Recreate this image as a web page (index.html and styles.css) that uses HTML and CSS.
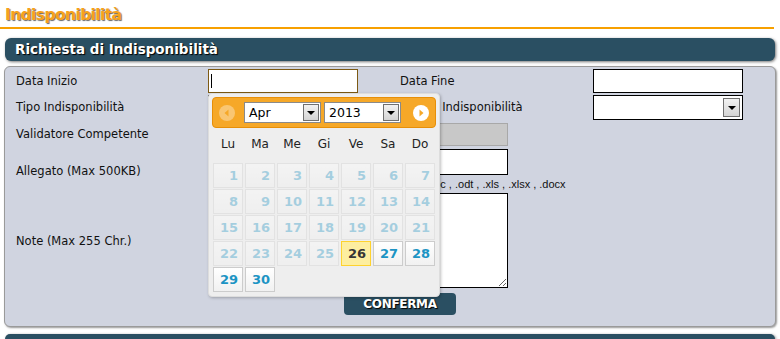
FILE: index.html
```html
<!DOCTYPE html>
<html lang="it">
<head>
    <meta charset="UTF-8">
    <meta name="viewport" content="width=device-width, initial-scale=1.0">
    <title>Indisponibilità</title>
    <link rel="stylesheet" href="styles.css">
</head>
<body>
    <h1 class="page-title">Indisponibilità</h1>

    <div class="section-bar">Richiesta di Indisponibilità</div>

    <div class="panel">
        <div class="form-grid">
            <div class="lbl lbl-r1">Data Inizio</div>
            <div class="cell">
                <div class="focus-wrap"><input type="text" class="field field-focus"></div>
            </div>
            <div class="lbl lbl-r1">Data Fine</div>
            <div class="cell"><input type="text" class="field"></div>

            <div class="lbl lbl-r2">Tipo Indisponibilità</div>
            <div class="cell">
                <div class="fake-select sel-form"><span class="sel-text"></span><span class="sel-btn"><span class="tri"></span></span></div>
            </div>
            <div class="lbl lbl-r2">Motivo Indisponibilità</div>
            <div class="cell">
                <div class="fake-select sel-form"><span class="sel-text"></span><span class="sel-btn"><span class="tri"></span></span></div>
            </div>

            <div class="lbl lbl-r3">Validatore Competente</div>
            <div class="cell span3"><input type="text" class="field field-wide field-disabled" disabled></div>

            <div class="lbl lbl-mid">Allegato (Max 500KB)</div>
            <div class="cell span3">
                <input type="text" class="field field-wide field-file">
                <div class="hint">.doc , .odt , .xls , .xlsx , .docx</div>
            </div>

            <div class="lbl lbl-mid">Note (Max 255 Chr.)</div>
            <div class="cell span3"><textarea class="notes"></textarea></div>
        </div>

        <div class="actions">
            <button class="btn-confirm">CONFERMA</button>
        </div>

        <!-- datepicker aperto sotto "Data Inizio" -->
        <div class="datepicker">
            <div class="dp-header">
                <span class="dp-nav dp-prev">
                    <svg width="16" height="16" viewBox="0 0 16 16"><circle cx="8" cy="8" r="8" fill="#fff"/><path d="M9.5 4.5 L5.5 8 L9.5 11.5 Z" fill="#f6a828"/></svg>
                </span>
                <div class="fake-select sel-month"><span class="sel-text">Apr</span><span class="sel-btn"><span class="tri"></span></span></div>
                <div class="fake-select sel-year"><span class="sel-text">2013</span><span class="sel-btn"><span class="tri"></span></span></div>
                <span class="dp-nav dp-next">
                    <svg width="16" height="16" viewBox="0 0 16 16"><circle cx="8" cy="8" r="8" fill="#fff"/><path d="M6.5 4.5 L10.5 8 L6.5 11.5 Z" fill="#f6a828"/></svg>
                </span>
            </div>
            <div class="dp-days">
                <span>Lu</span><span>Ma</span><span>Me</span><span>Gi</span><span>Ve</span><span>Sa</span><span>Do</span>
            </div>
            <div class="dp-grid">
                <span class="day off">1</span><span class="day off">2</span><span class="day off">3</span><span class="day off">4</span><span class="day off">5</span><span class="day off">6</span><span class="day off">7</span>
                <span class="day off">8</span><span class="day off">9</span><span class="day off">10</span><span class="day off">11</span><span class="day off">12</span><span class="day off">13</span><span class="day off">14</span>
                <span class="day off">15</span><span class="day off">16</span><span class="day off">17</span><span class="day off">18</span><span class="day off">19</span><span class="day off">20</span><span class="day off">21</span>
                <span class="day off">22</span><span class="day off">23</span><span class="day off">24</span><span class="day off">25</span><span class="day today">26</span><span class="day">27</span><span class="day">28</span>
                <span class="day">29</span><span class="day">30</span>
            </div>
        </div>
    </div>

    <div class="section-bar section-next"></div>
</body>
</html>
```

FILE: styles.css
```css
html, body {
    height: 339px;
    overflow: hidden;
}

body {
    margin: 0;
    width: 780px;
    font-family: 'DejaVu Sans', Verdana, sans-serif;
    font-size: 11.5px;
    color: #111;
    background: #fff;
}

.page-title {
    margin: 0 6px 0 0;
    padding: 5px 0 2px 5px;
    height: 20px;
    line-height: 20px;
    font-size: 15.5px;
    font-weight: bold;
    letter-spacing: -0.6px;
    color: #f7a21b;
    text-shadow: 1px 1px 1px #666;
    border-bottom: 2px solid #f7a000;
}

.section-bar {
    margin: 9px 5px 0 5px;
    height: 23px;
    line-height: 23px;
    padding-left: 10px;
    border-radius: 6px;
    background: #2a4f62;
    color: #fff;
    font-size: 13.5px;
    font-weight: bold;
    text-shadow: 1px 1px 1px #000;
    box-shadow: 1px 1px 3px #777;
}

.section-next {
    margin-top: 7px;
    height: 5px;
    border-radius: 6px 6px 0 0;
}

.panel {
    position: relative;
    box-sizing: border-box;
    height: 261px;
    margin: 5px 4px 0 4px;
    padding: 2px 0 0 11px;
    background: #d0d4e0;
    border: 1px solid #9a9a9a;
    border-radius: 6px;
    box-shadow: 1px 1px 2px #999;
}

.form-grid {
    display: grid;
    grid-template-columns: 192px 192px 193px 150px;
    grid-template-rows: 26px 28px 26px 44px 95px;
}

.lbl {
    color: #111;
    white-space: nowrap;
}

.lbl-r1 { line-height: 25px; }
.lbl-r2 { line-height: 25px; }
.lbl-r3 { line-height: 23px; }
.lbl-mid { align-self: center; }

.cell {
    align-self: start;
}

.span3 {
    grid-column: 2 / 5;
}

.field {
    box-sizing: border-box;
    display: block;
    width: 150px;
    height: 24px;
    margin: 0;
    padding: 0 2px;
    border: 1px solid #000;
    background: #fff;
    font: inherit;
    outline: none;
}

.focus-wrap {
    position: relative;
    width: 150px;
}

.focus-wrap::after {
    content: "";
    position: absolute;
    left: 3px;
    top: 5px;
    width: 1px;
    height: 14px;
    background: #000;
}

.field-focus {
    border-color: #7d5a14;
}

.field-wide {
    width: 300px;
}

.field-disabled {
    height: 23px;
    background: #c8c8c8;
    border-color: #a8a8a8;
}

.field-file {
    height: 26px;
}

.hint {
    margin-top: 3px;
    padding-left: 217px;
    font-family: 'Liberation Sans', Arial, sans-serif;
    font-size: 11px;
    white-space: nowrap;
}

.notes {
    box-sizing: border-box;
    display: block;
    width: 300px;
    height: 95px;
    margin: 0;
    border: 1px solid #000;
    background: #fff;
    font: inherit;
}

/* select finti (stile classico) */
.fake-select {
    box-sizing: border-box;
    display: flex;
    align-items: center;
    background: #fff;
    border: 1px solid #000;
}

.sel-text {
    flex: 1;
    padding-left: 4px;
    font-size: 12.5px;
    color: #000;
}

.sel-btn {
    box-sizing: border-box;
    display: flex;
    align-items: center;
    justify-content: center;
    width: 17px;
    height: 19px;
    margin-right: 2px;
    background: linear-gradient(#f2f2f2, #d4d4d4);
    border: 1px solid #707070;
}

.tri {
    width: 0;
    height: 0;
    border-left: 4px solid transparent;
    border-right: 4px solid transparent;
    border-top: 4px solid #000;
}

.sel-form {
    width: 150px;
    height: 25px;
}

.actions {
    margin-top: 5px;
    padding-left: 328px;
}

.btn-confirm {
    width: 112px;
    height: 22px;
    padding: 0;
    border: none;
    border-radius: 4px;
    background: #2a4f62;
    color: #fff;
    font-family: 'DejaVu Sans', Verdana, sans-serif;
    font-size: 12px;
    font-weight: bold;
    letter-spacing: -0.3px;
    text-shadow: 1px 1px 1px #000;
}

/* datepicker */
.datepicker {
    position: absolute;
    left: 203px;
    top: 26px;
    box-sizing: border-box;
    width: 232px;
    height: 204px;
    padding: 3px;
    background: #eeeeee;
    border: 1px solid #dddddd;
    border-radius: 4px;
    box-shadow: 1px 1px 3px rgba(0,0,0,0.25);
}

.dp-header {
    box-sizing: border-box;
    display: flex;
    align-items: center;
    height: 31px;
    background: #f6a828;
    border: 1px solid #e78f08;
    border-radius: 4px;
}

.dp-nav {
    display: block;
    width: 16px;
    height: 16px;
}

.dp-nav svg {
    display: block;
}

.dp-prev {
    margin-left: 6px;
    opacity: 0.35;
}

.dp-next {
    margin-left: 12px;
}

.sel-month {
    width: 77px;
    height: 21px;
    margin-left: 9px;
    border-color: #8a8a8a;
}

.sel-year {
    width: 77px;
    height: 21px;
    margin-left: 3px;
    border-color: #8a8a8a;
}

.sel-month .sel-btn,
.sel-year .sel-btn {
    width: 16px;
    height: 17px;
    margin-right: 1px;
}

.dp-days {
    display: grid;
    grid-template-columns: repeat(7, 1fr);
    column-gap: 2px;
    width: 222px;
    margin-left: 1px;
    height: 33px;
    line-height: 33px;
    text-align: center;
    font-size: 12px;
    color: #222;
}

.dp-grid {
    display: grid;
    grid-template-columns: repeat(7, 1fr);
    grid-auto-rows: 25px;
    gap: 1px 2px;
    width: 222px;
    margin: 2px 0 0 1px;
}

.day {
    box-sizing: border-box;
    padding-right: 4px;
    line-height: 23px;
    text-align: right;
    font-size: 13px;
    font-weight: bold;
    color: #1c94c4;
    background: linear-gradient(#ffffff, #f1f1f1);
    border: 1px solid #cccccc;
}

.day.off {
    opacity: 0.35;
}

.day.today {
    background: #fdeea0;
    border-color: #fed22f;
    color: #363636;
}
```
